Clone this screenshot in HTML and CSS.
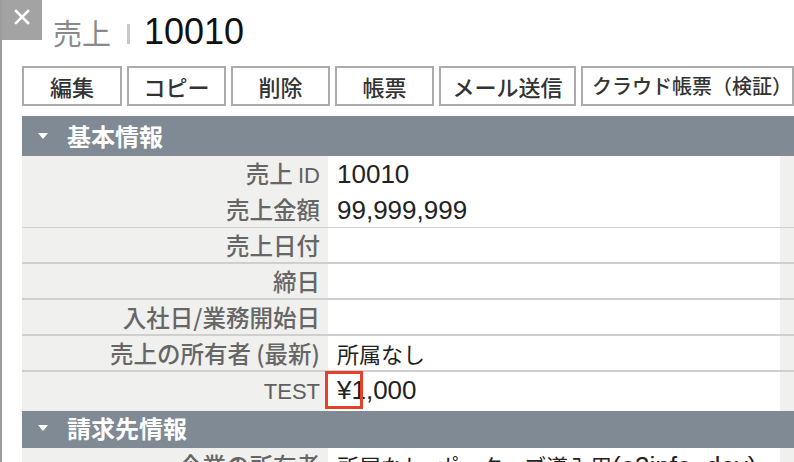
FILE: index.html
```html
<!DOCTYPE html>
<html lang="ja">
<head>
<meta charset="utf-8">
<title>売上 10010</title>
<link rel="stylesheet" href="styles.css">
</head>
<body>
<div class="page">
  <header class="topbar">
    <button class="close" aria-label="閉じる"><svg width="16" height="16" viewBox="0 0 16 16"><path d="M2 2L14 14M14 2L2 14" stroke="#fff" stroke-width="2.6" stroke-linecap="square"/></svg></button>
    <h1 class="title"><span class="title-type">売上</span><span class="title-sep"></span><span class="title-id">10010</span></h1>
  </header>
  <nav class="actions">
    <button class="btn">編集</button>
    <button class="btn">コピー</button>
    <button class="btn">削除</button>
    <button class="btn">帳票</button>
    <button class="btn">メール送信</button>
    <button class="btn btn-small">クラウド帳票（検証）</button>
  </nav>
  <section class="panel">
    <h2 class="panel-head"><span class="caret"></span>基本情報</h2>
    <div class="rows">
      <div class="row"><div class="label">売上 <span class="en">ID</span></div><div class="value"><span class="en">10010</span></div><div class="edge"></div></div>
      <div class="row"><div class="label">売上金額</div><div class="value"><span class="en">99,999,999</span></div><div class="edge"></div></div>
      <div class="row"><div class="label">売上日付</div><div class="value"></div><div class="edge"></div></div>
      <div class="row"><div class="label">締日</div><div class="value"></div><div class="edge"></div></div>
      <div class="row"><div class="label">入社日/業務開始日</div><div class="value"></div><div class="edge"></div></div>
      <div class="row"><div class="label">売上の所有者 (最新)</div><div class="value">所属なし</div><div class="edge"></div></div>
      <div class="row"><div class="label"><span class="en">TEST</span></div><div class="value"><span class="en">¥1,000</span><span class="mark"></span></div><div class="edge"></div></div>
    </div>
  </section>
  <section class="panel">
    <h2 class="panel-head"><span class="caret"></span>請求先情報</h2>
    <div class="rows">
      <div class="row"><div class="label">企業の所有者</div><div class="value">所属なし_ポーターブ導入用<span class="en">(e3info_dev)</span></div><div class="edge"></div></div>
    </div>
  </section>
</div>
</body>
</html>
```

FILE: styles.css
```css
* { box-sizing: border-box; }
html, body { margin: 0; padding: 0; background: #fff; }
body {
  font-family: "Noto Sans CJK JP", sans-serif;
  color: #222;
  overflow: hidden;
}
.page {
  border-left: 2px solid #9c9c9c;
  min-height: 462px;
}
.topbar {
  display: flex;
  align-items: flex-start;
  height: 66px;
}
.close {
  width: 40px;
  height: 40px;
  border: 0;
  padding: 0;
  margin: 0;
  background: #a3a3a3;
  display: flex;
  align-items: center;
  justify-content: center;
  padding-bottom: 6px;
}
.title {
  margin: 12px 0 0 11px;
  font-weight: 400;
  font-size: 29px;
  line-height: 40px;
  display: flex;
  align-items: center;
}
.title-type { color: #8a8a8a; }
.title-sep {
  display: inline-block;
  width: 3px;
  height: 20px;
  background: #c8c8c8;
  margin: 4px 14px 0 16px;
}
.title-id {
  color: #111;
  font-family: "Liberation Sans", Arial, sans-serif;
  font-size: 36px;
}

.actions {
  display: grid;
  grid-template-columns: 100px 99px 99px 99px 137px 1fr;
  gap: 5px;
  padding-left: 20px;
  padding-right: 2px;
  height: 40px;
}
.btn {
  border: 2px solid #ababab;
  background: #fff;
  font-family: "Noto Sans CJK JP", sans-serif;
  font-weight: 500;
  font-size: 22px;
  color: #333;
  padding: 0;
  line-height: 34px;
  white-space: nowrap;
}
.btn-small { font-size: 20px; text-align: left; padding-left: 9px; }

.panel { margin-left: 20px; }
.actions + .panel { margin-top: 10px; }
.panel-head {
  margin: 0;
  height: 40px;
  background: #808a94;
  color: #fff;
  font-weight: 700;
  font-size: 24px;
  line-height: 40px;
  display: flex;
  align-items: center;
  padding-left: 16px;
}
.caret {
  width: 0;
  height: 0;
  border-left: 5.5px solid transparent;
  border-right: 5.5px solid transparent;
  border-top: 6px solid #fff;
  margin-right: 19px;
}
.row {
  display: grid;
  grid-template-columns: 306px 1fr 14px;
  height: 36px;
}
.row > div {
  border-bottom: 2px solid #cfcfcf;
}
.row:last-child > div { border-bottom-color: transparent; }
.label {
  background: #f0f0ee;
  color: #666;
  font-weight: 500;
  font-size: 23.5px;
  text-align: right;
  padding-right: 8px;
  line-height: 34px;
  white-space: nowrap;
}
.value {
  position: relative;
  background: #fff;
  font-size: 22px;
  line-height: 34px;
  padding-left: 9px;
  white-space: nowrap;
}
.edge { background: #f0f0ee; }
.en { font-family: "Liberation Sans", Arial, sans-serif; font-size: 26px; font-weight: 400; }
.label .en { font-size: 22px; color: #5f5f5f; }
.mark {
  position: absolute;
  left: -3px;
  top: -1px;
  width: 38px;
  height: 38px;
  border: 3px solid #e4412b;
}
```
